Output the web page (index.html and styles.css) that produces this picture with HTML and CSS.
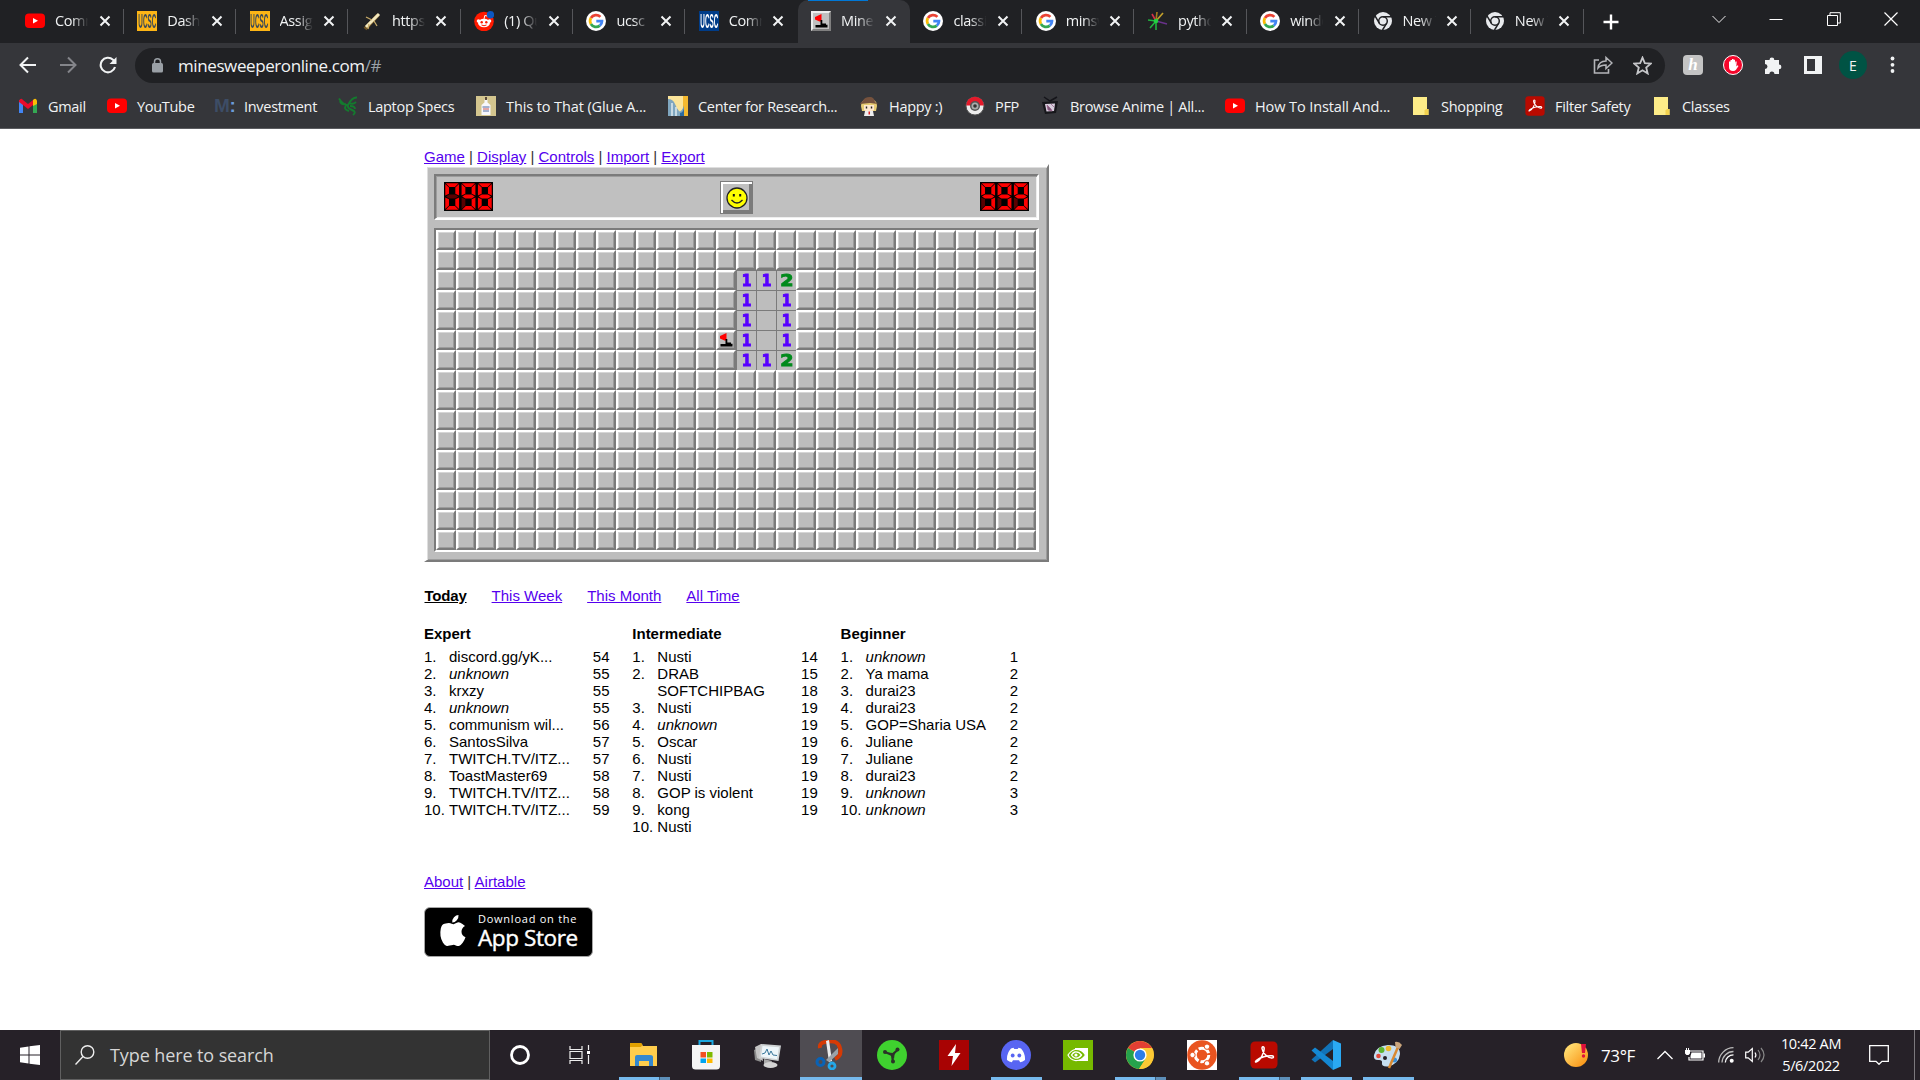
FILE: index.html
```html
<!DOCTYPE html>
<html lang="en">
<head>
<meta charset="utf-8">
<title>Minesweeper Online</title>
<link rel="stylesheet" href="styles.css">
</head>
<body>
<svg class="defs" width="0" height="0" aria-hidden="true">
  <defs>
    <symbol id="i-yt" viewBox="0 0 20 20"><rect y="2.5" width="20" height="14.5" rx="4" fill="#f00"/><path d="M8 7v5.6l5-2.8z" fill="#fff"/></symbol>
    <symbol id="i-google" viewBox="0 0 20 20"><circle cx="10" cy="10" r="10" fill="#fff"/><g fill="none" stroke-width="2.7"><path d="M4.9 7A6 6 0 0 1 14.4 5.9" stroke="#ea4335"/><path d="M4.9 7a6 6 0 0 0 0 6" stroke="#fbbc05"/><path d="M4.9 13a6 6 0 0 0 8.9 1.6" stroke="#34a853"/><path d="M13.8 14.6A5.600 5.600 0 0 0 16 10.200H10.300" stroke="#4285f4"/></g></symbol>
    <symbol id="i-chrome-grey" viewBox="0 0 20 20"><circle cx="10" cy="10" r="9" fill="#e8eaed"/><circle cx="10" cy="10" r="4.300" fill="none" stroke="#202124" stroke-width="1.500"/><path d="M10 5.700h8.500M6.300 12.200L2 4.900M13.700 12.200L9.500 19" stroke="#202124" stroke-width="1.500"/></symbol>
    <symbol id="i-x" viewBox="0 0 12 12"><path d="M1.500 1.500l9 9M10.500 1.500l-9 9" stroke="#f1f3f4" stroke-width="2"/></symbol>
    <symbol id="i-folder" viewBox="0 0 18 20"><path d="M1 1h14v12h1.500v6H1z" fill="#fdec88"/><path d="M12.500 19v-4.500l1.500-1.500h2.500v6z" fill="#f3d24e"/></symbol>
    <symbol id="i-pdf" viewBox="0 0 30 30"><rect x="1.500" y="1.500" width="27" height="27" rx="4.500" fill="#b90a00"/><path d="M7 22c4-1 9-10 8-14.500-.4-1.400-2.200-1-2 1 .4 4.500 6 9.500 10 9.500 2 0 2-2 0-2.200-4.500-.5-12 1.700-15.500 4.500-1.300 1.100-1.200 2.100-.5 1.700z" fill="none" stroke="#fff" stroke-width="1.500"/></symbol>
    <symbol id="i-flag" viewBox="0 0 20 20"><path d="M4 6L10.500 3v7.500h-2L4 8.500z" fill="#f00"/><path d="M9.500 9h1.800v3.500H15v1.200h1.500v2.800h-12v-2.500h5z" fill="#000"/></symbol>
  </defs>
</svg>

<header class="chrome">
  <div class="tabstrip">
    <div class="tab"><svg class="fav"><use href="#i-yt"/></svg><span class="tab-title">Comm</span><svg class="close"><use href="#i-x"/></svg></div>
    <div class="tab"><span class="fav ucsc"><b>UCSC</b></span><span class="tab-title">Dashb</span><svg class="close"><use href="#i-x"/></svg></div>
    <div class="tab"><span class="fav ucsc"><b>UCSC</b></span><span class="tab-title">Assign</span><svg class="close"><use href="#i-x"/></svg></div>
    <div class="tab"><svg class="fav" viewBox="0 0 20 20"><path d="M3 18L16 4" stroke="#6f5424" stroke-width="4"/><path d="M4 16L17 3" stroke="#f3e8bd" stroke-width="3"/><path d="M4 6l6 3M7 13l-1 5M12 10l3 5" stroke="#c6aa67" stroke-width="1.300"/></svg><span class="tab-title">https:</span><svg class="close"><use href="#i-x"/></svg></div>
    <div class="tab"><svg class="fav" viewBox="0 0 20 20"><circle cx="10" cy="10.500" r="9.800" fill="#ff1a00"/><circle cx="4.500" cy="10" r="1.800" fill="#fff"/><circle cx="15.500" cy="10" r="1.800" fill="#fff"/><ellipse cx="10" cy="12" rx="6" ry="4.200" fill="#fff"/><circle cx="7.700" cy="11.200" r="1.200" fill="#ff1a00"/><circle cx="12.300" cy="11.200" r="1.200" fill="#ff1a00"/><path d="M7.500 14q2.500 1.500 5 0" fill="none" stroke="#ff1a00"/><path d="M10 8l.8-3.500 3 .6" fill="none" stroke="#fff"/><circle cx="16.500" cy="3.800" r="3.700" fill="#0b57c2"/></svg><span class="tab-title">(1) Qu</span><svg class="close"><use href="#i-x"/></svg></div>
    <div class="tab"><svg class="fav"><use href="#i-google"/></svg><span class="tab-title">ucsc r</span><svg class="close"><use href="#i-x"/></svg></div>
    <div class="tab before-active"><span class="fav ucsc blue"><b>UCSC</b></span><span class="tab-title">Comm</span><svg class="close"><use href="#i-x"/></svg></div>
    <div class="tab active"><span class="fav mine"><svg viewBox="2 2 16 16"><use href="#i-flag" width="20" height="20"/></svg></span><span class="tab-title">Mines</span><svg class="close"><use href="#i-x"/></svg></div>
    <div class="tab"><svg class="fav"><use href="#i-google"/></svg><span class="tab-title">classic</span><svg class="close"><use href="#i-x"/></svg></div>
    <div class="tab"><svg class="fav"><use href="#i-google"/></svg><span class="tab-title">minsw</span><svg class="close"><use href="#i-x"/></svg></div>
    <div class="tab"><svg class="fav" viewBox="0 0 20 20"><g stroke-width="1.600"><path d="M8 10L4 3" stroke="#d8314a"/><path d="M8 10l1-9" stroke="#a8791d"/><path d="M8 10l7-8" stroke="#c2a02b"/><path d="M8 10l11 3" stroke="#69328b"/><path d="M8 10L0 9M8 10l-6 7M8 10v9" stroke="#22b33e"/></g><circle cx="8" cy="10" r="2.300" fill="#22d142"/></svg><span class="tab-title">pytho</span><svg class="close"><use href="#i-x"/></svg></div>
    <div class="tab"><svg class="fav"><use href="#i-google"/></svg><span class="tab-title">windo</span><svg class="close"><use href="#i-x"/></svg></div>
    <div class="tab"><svg class="fav"><use href="#i-chrome-grey"/></svg><span class="tab-title">New T</span><svg class="close"><use href="#i-x"/></svg></div>
    <div class="tab"><svg class="fav"><use href="#i-chrome-grey"/></svg><span class="tab-title">New T</span><svg class="close"><use href="#i-x"/></svg></div>
    <svg class="new-tab" viewBox="0 0 16 16"><path d="M8 .5v15M.5 8h15" stroke="#fff" stroke-width="2.400"/></svg>
    <div class="window-buttons">
      <svg viewBox="0 0 14 14"><path d="M.5 4L7 10.500 13.500 4" fill="none" stroke="#eee"/></svg>
      <svg viewBox="0 0 14 14"><path d="M.5 7.500h13" stroke="#fff"/></svg>
      <svg viewBox="0 0 14 14"><path d="M.5 3.500h10v10H.5zM3 3V.7h10.300V11H11" fill="none" stroke="#fff"/></svg>
      <svg viewBox="0 0 14 14"><path d="M.5.500l13 13M13.500.500l-13 13" stroke="#fff" stroke-width="1.200"/></svg>
    </div>
  </div>
  <div class="toolbar">
    <svg class="nav" viewBox="0 0 18 18"><path d="M17 9H2M9 1.500L1.500 9 9 16.500" fill="none" stroke="#f1f3f4" stroke-width="2"/></svg>
    <svg class="nav" viewBox="0 0 18 18"><path d="M1 9h15M9 1.500L16.500 9 9 16.500" fill="none" stroke="#84858a" stroke-width="2"/></svg>
    <svg class="nav" viewBox="0 0 18 18"><path d="M16 11a7.300 7.300 0 1 1-2-7.300L16 5.800" fill="none" stroke="#f1f3f4" stroke-width="2.100"/><path d="M17.500 1v7h-7z" fill="#f1f3f4"/></svg>
    <div class="omnibox">
      <svg class="lock" viewBox="0 0 11 15"><rect y="5" width="11" height="9.500" rx="1.500" fill="#9aa0a6"/><path d="M2.500 6V3.800a3 3 0 0 1 6 0V6" fill="none" stroke="#9aa0a6" stroke-width="1.500"/></svg>
      <span class="url">minesweeperonline.com<i>/#</i></span>
      <svg class="share" viewBox="0 0 20 20"><path d="M6 5H1.500v13h14v-4" fill="none" stroke="#b4b5b9" stroke-width="1.600"/><path d="M5 13c.5-4.500 3-7 8-7V2.500L19 8l-6 5.500V10c-4 0-6 .8-8 3z" fill="none" stroke="#b4b5b9" stroke-width="1.500"/></svg>
      <svg class="star" viewBox="0 0 18 18"><path d="M9 1.500l2.200 5.300 5.600.4-4.300 3.700 1.400 5.600L9 13.500l-4.900 3 1.400-5.600L1.200 7.200l5.600-.4z" fill="none" stroke="#c5c6c9" stroke-width="1.700"/></svg>
    </div>
    <div class="extensions">
      <span class="honey">h</span>
      <svg viewBox="0 0 20 20"><circle cx="10" cy="10" r="9.500" fill="#f5062b" stroke="#fff"/><path d="M6 10V6.500h1.500V9 5H9v4-5h1.500v5-4.200H12V9.500l.3-3h1.400l-.4 5 1.200-1.200 1 .8-2.500 3.600Q12 16 10 16q-4 0-4-4z" fill="#fff"/></svg>
      <svg viewBox="0 0 20 20"><path d="M2 5h4.500a2.400 2.400 0 1 1 4.800 0H16v4.500a2.400 2.400 0 1 1 0 4.800V19h-4.600a2.500 2.500 0 0 0-5 0H2v-5a2.500 2.500 0 0 0 0-5z" fill="#f1f3f4"/></svg>
      <svg viewBox="0 0 20 20"><path d="M1 1h18v18H1zM4 4v12h8V4z" fill="#f1f3f4" fill-rule="evenodd"/></svg>
      <span class="avatar">E</span>
      <svg viewBox="0 0 20 20"><g fill="#f1f3f4"><circle cx="9.500" cy="3.500" r="1.900"/><circle cx="9.500" cy="9.800" r="1.900"/><circle cx="9.500" cy="16" r="1.900"/></g></svg>
    </div>
  </div>
  <nav class="bookmarks">
    <a><svg viewBox="0 0 20 20"><path d="M1 4v13h4V8z" fill="#4285f4"/><path d="M15 8v9h4V4z" fill="#34a853"/><path d="M1 4.500Q3 1.500 5 4l5 4 5-4v5l-5 4-5-4-4-3z" fill="#ea0b2b"/><path d="M15 4q3-3 4 1v3l-4 2z" fill="#fbbc05"/></svg>Gmail</a>
    <a><svg><use href="#i-yt"/></svg>YouTube</a>
    <a><span class="invest">M<i>:</i></span>Investment</a>
    <a><svg viewBox="0 0 20 20"><g fill="none" stroke="#147a2e" stroke-width="1.900"><path d="M10 9Q14 1 19 1.500M11 7q4 2 7-1M10 9Q5 9 1 2.500M8 8Q3 9 2 5M10 9q-1 3 4 5t1 5M8 10q-3 3 3 5M12 10q5 0 5 3"/></g></svg>Laptop Specs</a>
    <a class="wide"><svg viewBox="0 0 20 20"><path d="M0 0h20v20H0z" fill="#d3c58e"/><path d="M8.500 3.500h3v3l3 2.500v10h-9V9l3-2.500z" fill="#f7f7fa"/><path d="M9 1h2v3H9z" fill="#5a4a3a"/><path d="M6.500 11h7M7 15h6" stroke="#516aa5"/><path d="M7 13h6" stroke="#c55"/></svg>This to That (Glue A...</a>
    <a><svg viewBox="0 0 20 20"><path d="M0 0h20v20H0z" fill="#fce59a"/><path d="M15 0h5v20h-5z" fill="#f4b92f"/><path d="M0 3q5 0 7 5t4 7 5-5v10H0z" fill="#7fa6bf"/><path d="M4 7v13M8 11v9" stroke="#dfeaf0" stroke-width="1.500"/><path d="M12 17q4 0 4-8v11h-4z" fill="#2c6aa0"/></svg>Center for Research...</a>
    <a><svg viewBox="0 0 20 20"><path d="M2 10q0-7 8-7t8 7l-1 5H3z" fill="#e7cc73"/><path d="M1 8q1-2 3-3 1-4 7-4 4 0 5 5l3 2-8-1z" fill="#76523d"/><path d="M5 9h10v5q-5 3-10 0z" fill="#ffe9cf"/><path d="M6 15h8l1 5H5z" fill="#eee"/><path d="M7.500 10.500v2M12.500 10.500v2" stroke="#222" stroke-width="1.400"/><path d="M9.500 15.500h1.500v3H9.500z" fill="#d22"/></svg>Happy :)</a>
    <a><svg viewBox="0 0 20 20"><circle cx="10" cy="10" r="9" fill="#ececec" stroke="#555"/><path d="M1.200 9.500a8.800 8.800 0 0 1 17.600 0z" fill="#e5192a"/><circle cx="10" cy="10" r="5" fill="#555"/><circle cx="10" cy="10" r="3.500" fill="#aaa"/><circle cx="10" cy="10" r="1.800" fill="#333"/></svg>PFP</a>
    <a><svg viewBox="0 0 20 20"><path d="M4 1l6 4 7-4" fill="none" stroke="#15151a" stroke-width="1.500"/><path d="M2 6l16-1-2 12-11 1z" fill="#17171b"/><path d="M5 8l10-.500-1 7.500-7.500.5z" fill="#d8cede"/><path d="M7 9l4 4 1 2-4-1zM11 8l3 3" fill="#7a5578" stroke="#935a80" stroke-width=".7"/></svg>Browse Anime | All...</a>
    <a class="wide"><svg><use href="#i-yt"/></svg>How To Install And...</a>
    <a><svg><use href="#i-folder"/></svg>Shopping</a>
    <a><svg viewBox="1 1 28 28"><use href="#i-pdf" width="30" height="30"/></svg>Filter Safety</a>
    <a><svg><use href="#i-folder"/></svg>Classes</a>
  </nav>
</header>

<main class="page">
  <nav class="links top-links"><a>Game</a> | <a>Display</a> | <a>Controls</a> | <a>Import</a> | <a>Export</a></nav>
  <section class="game">
    <div class="panel">
      <svg class="led" id="mines" viewBox="0 0 39 23" preserveAspectRatio="none"></svg>
      <div class="face"><svg viewBox="0 0 22 22"><circle cx="11" cy="11" r="10" fill="#ff0" stroke="#222" stroke-width="1.300"/><path d="M6.800 7h2v2.500h-2zM13.200 7h2v2.500h-2z" fill="#111"/><path d="M5.500 13q5.500 6 11 0" fill="none" stroke="#222" stroke-width="1.300"/></svg></div>
      <svg class="led" id="clock" viewBox="0 0 39 23" preserveAspectRatio="none"></svg>
    </div>
    <div class="field" id="field"></div>
  </section>
  <nav class="periods"><a class="current">Today</a><a>This Week</a><a>This Month</a><a>All Time</a></nav>
  <section class="scores">
    <div class="board"><h2>Expert</h2>
      <ol>
        <li><span>1.</span><span>discord.gg/yK...</span><span>54</span></li>
        <li><span>2.</span><em>unknown</em><span>55</span></li>
        <li><span>3.</span><span>krxzy</span><span>55</span></li>
        <li><span>4.</span><em>unknown</em><span>55</span></li>
        <li><span>5.</span><span>communism wil...</span><span>56</span></li>
        <li><span>6.</span><span>SantosSilva</span><span>57</span></li>
        <li><span>7.</span><span>TWITCH.TV/ITZ...</span><span>57</span></li>
        <li><span>8.</span><span>ToastMaster69</span><span>58</span></li>
        <li><span>9.</span><span>TWITCH.TV/ITZ...</span><span>58</span></li>
        <li><span>10.</span><span>TWITCH.TV/ITZ...</span><span>59</span></li>
      </ol>
    </div>
    <div class="board"><h2>Intermediate</h2>
      <ol>
        <li><span>1.</span><span>Nusti</span><span>14</span></li>
        <li><span>2.</span><span>DRAB</span><span>15</span></li>
        <li><span></span><span>SOFTCHIPBAG</span><span>18</span></li>
        <li><span>3.</span><span>Nusti</span><span>19</span></li>
        <li><span>4.</span><em>unknown</em><span>19</span></li>
        <li><span>5.</span><span>Oscar</span><span>19</span></li>
        <li><span>6.</span><span>Nusti</span><span>19</span></li>
        <li><span>7.</span><span>Nusti</span><span>19</span></li>
        <li><span>8.</span><span>GOP is violent</span><span>19</span></li>
        <li><span>9.</span><span>kong</span><span>19</span></li>
        <li><span>10.</span><span>Nusti</span><span></span></li>
      </ol>
    </div>
    <div class="board"><h2>Beginner</h2>
      <ol>
        <li><span>1.</span><em>unknown</em><span>1</span></li>
        <li><span>2.</span><span>Ya mama</span><span>2</span></li>
        <li><span>3.</span><span>durai23</span><span>2</span></li>
        <li><span>4.</span><span>durai23</span><span>2</span></li>
        <li><span>5.</span><span>GOP=Sharia USA</span><span>2</span></li>
        <li><span>6.</span><span>Juliane</span><span>2</span></li>
        <li><span>7.</span><span>Juliane</span><span>2</span></li>
        <li><span>8.</span><span>durai23</span><span>2</span></li>
        <li><span>9.</span><em>unknown</em><span>3</span></li>
        <li><span>10.</span><em>unknown</em><span>3</span></li>
      </ol>
    </div>
  </section>
  <nav class="links foot-links"><a>About</a> | <a>Airtable</a></nav>
  <div class="appstore">
    <svg viewBox="0 0 26 32"><path d="M18.500 0q.3 3-1.700 5.300T12.300 7.500q-.3-3 1.700-5.200T18.500 0zM25 11q-3.500 2-3.500 5.700T25.500 22.300q-1 3-2.800 5.500T19 31q-1.500.2-3.200-.6t-3-.4q-1.300 0-3.100.6T6.800 31q-1.800-.2-3.800-3.300T.5 21 .8 13.500 4.500 8.800 8.900 8q1.500.3 2.800.8t1.900.4T16.300 8t4-.3T25 11z" fill="#fff"/></svg>
    <div><small>Download on the</small><strong>App Store</strong></div>
  </div>
</main>

<footer class="taskbar">
  <div class="start"><svg viewBox="0 0 20 20"><path d="M0 2.800L8.500 1.500v8H0zM9.500 1.300L20 0v9.500H9.500zM0 10.500h8.500v8L0 17.300zM9.500 10.500H20V20L9.500 18.700z" fill="#fff"/></svg></div>
  <div class="search"><svg viewBox="0 0 20 20"><circle cx="12.500" cy="7" r="6.300" fill="none" stroke="#eee" stroke-width="1.400"/><path d="M8 11.500L.5 19.500" stroke="#eee" stroke-width="1.400"/></svg><span>Type here to search</span></div>
  <div class="task"><svg viewBox="0 0 30 30"><circle cx="15" cy="15" r="8.500" fill="none" stroke="#fff" stroke-width="2.800"/></svg></div>
  <div class="task"><svg viewBox="0 0 30 30"><path d="M3 6v3.500h12V6M3 24v-3.500h12V24M3 11.500h12v7H3zM21.500 5v5M21.500 15v9" fill="none" stroke="#eee" stroke-width="1.200"/><path d="M20 11h3v3h-3z" fill="#fff"/></svg></div>
  <div class="task run multi"><svg viewBox="0 0 30 30"><path d="M1 4q0-1 1-1h10l2 3h14v20H1z" fill="#ffcd4c"/><path d="M1 4q0-1 1-1h10l1.500 1.500L12 7H1z" fill="#e0a000"/><path d="M6 26v-9q0-2 2-2h13q3 0 3 2v9h-4v-5H10v5z" fill="#3488cf"/></svg></div>
  <div class="task"><svg viewBox="0 0 30 30"><path d="M8.500 6.500V1h13v5.500" fill="none" stroke="#1ba8e0" stroke-width="2"/><path d="M1 5h28v21q0 3.500-3.500 3.500h-21Q1 29.500 1 26z" fill="#f5f5f5"/><path d="M9.500 12H15v5.500H9.500z" fill="#f25022"/><path d="M16 12h5.500v5.500H16z" fill="#7fba00"/><path d="M9.500 18.500H15V23H9.500z" fill="#00a4ef"/><path d="M16 18.500h5.500V23H16z" fill="#ffb900"/></svg></div>
  <div class="task"><svg viewBox="0 0 30 30"><path d="M1 10l7-3v15l-6-2z" fill="#8c8c8c"/><path d="M2 7l6-3 2 17-6-3z" fill="#c4c4c4"/><path d="M8 4l20 1.500L25.500 21 6 18z" fill="#cfd3d4"/><path d="M9.500 6l16.500 1.200-2 12L8 16.500z" fill="#eef6fa"/><path d="M9 14l3-1 2-4 2 6 2-4 2 4 4 .5" fill="none" stroke="#38779b"/><path d="M11 19l8 2-1 3h-7z" fill="#aaa"/><ellipse cx="17.500" cy="25" rx="7" ry="3" fill="#d4d4d4"/></svg></div>
  <div class="task run focus"><svg viewBox="0 0 30 30"><path d="M5 8Q4 3 10 2q13-3 15 6 2 8-5 11" fill="none" stroke="#d53a05" stroke-width="4"/><path d="M11 1l3-1 3 21-3 1z" fill="#ececec"/><path d="M23 8v6l-9 8-3-2z" fill="#9ba2a8"/><circle cx="5.500" cy="22" r="3.500" fill="none" stroke="#0a62b5" stroke-width="3"/><circle cx="17" cy="26" r="3" fill="none" stroke="#23a7e8" stroke-width="2.800"/></svg></div>
  <div class="task"><svg viewBox="0 0 30 30"><circle cx="15" cy="15" r="15" fill="#3fd12f"/><path d="M15 15L8 12M15 15l6-5.500M15 15l1 7" stroke="#2b3328" stroke-width="2.200"/><path d="M11 12.500l5 .500 3-2-1.500 4-.500 4-2.500-3z" fill="#2b3328"/><g fill="#2b3328"><circle cx="8" cy="12" r="2"/><circle cx="20.500" cy="9.500" r="2"/><circle cx="16" cy="21.500" r="2"/></g></svg></div>
  <div class="task"><svg viewBox="0 0 30 30"><path d="M0 0h30v30H0z" fill="#a80303"/><path d="M17 4L8.500 16H14l-1.500 10L21.500 13H16z" fill="#fff"/></svg></div>
  <div class="task run"><svg viewBox="0 0 30 30"><circle cx="15" cy="15" r="15" fill="#5865f2"/><path d="M10 8.500l2.500-.700.800 1.200h3.400l.8-1.200 2.500.7q4.500 5 4 11.500-2.300 1.800-4.800 2.200l-1.200-2h-6l-1.200 2Q8.300 21.800 6 20q-.5-6.500 4-11.500z" fill="#fff"/><ellipse cx="11.700" cy="15.500" rx="1.900" ry="2.100" fill="#5865f2"/><ellipse cx="18.300" cy="15.500" rx="1.900" ry="2.100" fill="#5865f2"/></svg></div>
  <div class="task"><svg viewBox="0 0 30 30"><path d="M0 0h30v30H0z" fill="#76b900"/><path d="M12 8h13v13H12z" fill="#fff"/><path d="M12 9.500q7-.5 10.500 5.500-4 6-10.500 5.500-5-1-7-5.500 3-4.500 7-5.500z" fill="#76b900" stroke="#fff" stroke-width="1.200"/><path d="M12 12q4-.5 6.500 3-2.500 3.500-6.500 3-2.500-1-3.500-3 1.500-2.500 3.500-3z" fill="none" stroke="#fff" stroke-width="1.300"/><circle cx="13" cy="15" r="1.600" fill="#fff"/></svg></div>
  <div class="task run multi"><svg viewBox="0 0 30 30"><circle cx="15" cy="15" r="14" fill="#fcc934"/><path d="M15 15L2.900 8A14 14 0 0 1 27.100 8H15z" fill="#e23f33"/><path d="M15 15L2.900 8A14 14 0 0 0 14 29l7-10.500z" fill="#25a24c"/><path d="M15 8h12.100Q31 16 25 25q-5 4.500-11 4l7-11z" fill="#fcc934"/><circle cx="15" cy="15" r="6.600" fill="#fff"/><circle cx="15" cy="15" r="5.200" fill="#2c7de9"/></svg></div>
  <div class="task"><svg viewBox="0 0 30 30"><path d="M0 0h30v30H0z" fill="#fff"/><circle cx="15" cy="15" r="14.800" fill="#e95420"/><circle cx="15" cy="15" r="6.800" fill="none" stroke="#fff" stroke-width="3" stroke-dasharray="12.200 2"/><g fill="#fff" stroke="#e95420"><circle cx="5.500" cy="15" r="2.700"/><circle cx="20" cy="6.700" r="2.700"/><circle cx="20" cy="23.300" r="2.700"/></g></svg></div>
  <div class="task run multi"><svg><use href="#i-pdf"/></svg></div>
  <div class="task run"><svg viewBox="0 0 30 30"><path d="M22 0l8 3.500v23L22 30z" fill="#2aa9f3"/><path d="M22 0v9L4 22.500.5 19.500z" fill="#1173b8"/><path d="M22 30v-9L4 7.500.5 10.500z" fill="#1488d3"/></svg></div>
  <div class="task run"><svg viewBox="0 0 30 30"><path d="M15 5Q27 5 27 14q-1 10-12 12.500-7 .5-6-4 .5-3-4-2.500Q0 20 1 15 3 6 15 5z" fill="#c6dff0"/><circle cx="8.500" cy="10" r="3" fill="#5cb531"/><circle cx="15.500" cy="8.500" r="2.800" fill="#f0b72a"/><circle cx="5.500" cy="16" r="2.300" fill="#e34a3b"/><circle cx="12" cy="18" r="2" fill="#262128"/><circle cx="21.500" cy="20" r="2.500" fill="#3a8fd8"/><path d="M16 28L25 7" stroke="#d98a32" stroke-width="2.500"/><path d="M22 2q4-1 7 3l-2.500 4-4-2z" fill="#caa57c"/></svg></div>
  <div class="tray">
    <svg class="sun" viewBox="0 0 24 24"><defs><linearGradient id="sun" x2="1" y2="1"><stop offset=".2" stop-color="#ffd96b"/><stop offset="1" stop-color="#f98a0a"/></linearGradient></defs><circle cx="12" cy="12" r="12" fill="url(#sun)"/><path d="M17 1h5l-1 9h-3z" fill="#e0103a"/><circle cx="19.500" cy="13" r="1.700" fill="#e0103a"/></svg>
    <span class="temp">73°F</span>
    <svg class="chev" viewBox="0 0 16 10"><path d="M.5 9L8 1.500 15.500 9" fill="none" stroke="#fff" stroke-width="1.300"/></svg>
    <svg class="batt" viewBox="0 0 20 14"><path d="M5 3h13v9H4V9" fill="none" stroke="#fff" stroke-width="1.200"/><path d="M6.500 4.500h10v6H5.500V8zM18.500 5.500H20v4h-1.500zM0 2h5v3.500l-1.500 1.500h-2L0 5.500zM1 0h1v2H1zM3 0h1v2H3z" fill="#fff"/></svg>
    <svg class="wifi" viewBox="0 0 16 16"><g fill="none" stroke="#bbb" stroke-width="1.300"><path d="M.7 15.500A15 15 0 0 1 15.500.7"/><path d="M4 15.500A11.500 11.500 0 0 1 15.500 4.500" /><path d="M7.300 15.500a8.200 8.200 0 0 1 8.200-7.700" stroke="#fff"/></g><circle cx="13.700" cy="13.700" r="2" fill="#fff"/></svg>
    <svg class="vol" viewBox="0 0 20 16"><path d="M.7 5.200h2.500L7.300 1.500v13L3.200 10.800H.7z" fill="none" stroke="#fff" stroke-width="1.200"/><path d="M10 5.500q1.800 2.500 0 5" fill="none" stroke="#fff" stroke-width="1.200"/><path d="M13 3q4 5 0 10M16 1q6 7 0 14" fill="none" stroke="#888" stroke-width="1.200"/></svg>
    <div class="datetime"><span>10:42 AM</span><span>5/6/2022</span></div>
    <svg class="note" viewBox="0 0 20 20"><path d="M.7.700h18.600v15.600H13l-3 3-3-3H.7z" fill="none" stroke="#fff" stroke-width="1.300"/></svg>
  </div>
</footer>
<script src="board.js"></script>
</body>
</html>
```
FILE: styles.css
```css
* { box-sizing: border-box; }
body { margin: 0; width: 1920px; height: 1080px; overflow: hidden; display: flex; flex-direction: column; background: #fff; font-family: "Liberation Sans", Arial, sans-serif; font-size: 15px; color: #000; }
svg { display: block; flex: none; }
.defs { display: none; }

/* Browser window */
.chrome { height: 129px; flex: none; background: #35363a; border-bottom: 1px solid #5b5c60; color: #f1f3f4; font-family: "Open Sans", "Noto Sans", sans-serif; }
.tabstrip { height: 43px; background: #202124; display: flex; align-items: center; padding-left: 11.5px; }
.tab { width: 112.3px; height: 43px; flex: none; display: flex; align-items: center; position: relative; padding: 0 0 1px 13.5px; }
.tab::after { content: ""; position: absolute; right: 0; top: 9px; width: 1px; height: 25px; background: #55565a; }
.tab.active::after, .tab.before-active::after { display: none; }
.tab.active { background: #35363a; border-radius: 10px 10px 0 0; }
.tab.active::before { content: ""; position: absolute; left: 10px; top: 0; width: 60px; height: 1px; background: #0078d7; }
.fav { width: 20px; height: 20px; flex: none; }
.ucsc { background: #fdb515; color: #3c4a57; display: flex; justify-content: center; align-items: center; }
.ucsc b { font: 700 15px/20px "Liberation Sans", sans-serif; transform: scale(.42, 1.3); }
.ucsc.blue { background: #003c88; color: #fff; }
.mine { background: #c0c0c0; border: 2px solid #eee; border-right-color: #808080; border-bottom-color: #808080; }
.mine svg { width: 16px; height: 16px; }
.tab-title { width: 34px; margin: -1px 1px 0 10px; overflow: hidden; white-space: nowrap; font-size: 14.5px; letter-spacing: -.4px; line-height: 24px; -webkit-mask-image: linear-gradient(90deg, #000 50%, transparent 98%); mask-image: linear-gradient(90deg, #000 50%, transparent 98%); }
.close { width: 12px; height: 12px; margin-left: 8.500px; }
.new-tab { width: 16px; height: 16px; margin-left: 19px; }
.window-buttons { margin: -6px 22px 0 auto; display: flex; gap: 43.500px; }
.window-buttons svg { width: 14px; height: 14px; }
.toolbar { height: 43px; display: flex; align-items: center; padding: 1px 0 0 19px; }
.nav { width: 18px; height: 18px; margin-right: 22px; }
.omnibox { width: 1530px; height: 35px; margin-left: -4px; border-radius: 18px; background: #202124; display: flex; align-items: center; padding: 0 13px 0 17px; }
.lock { width: 11px; height: 15px; margin-right: 15px; }
.url { flex: 1; font-size: 17px; letter-spacing: -.4px; }
.url i { font-style: normal; color: #9aa0a6; }
.share { width: 20px; height: 20px; margin-right: 20px; }
.star { width: 19px; height: 19px; }
.extensions { display: flex; align-items: center; gap: 20px; padding-left: 18px; }
.extensions svg, .honey { width: 20px; height: 20px; }
.honey { border-radius: 4px; background: #c4c4c4; color: #fff; font: italic 700 17px/19px "Liberation Serif", serif; text-align: center; }
.avatar { width: 28px; height: 28px; margin: 0 -4px; border-radius: 50%; background: #005344; display: flex; align-items: center; justify-content: center; font-size: 14px; }
.bookmarks { height: 40px; padding-left: 18px; display: grid; align-items: center; grid-template-columns: 89px 107px 124px 138px 192px 191px 106px 75px 185px 186px 114px 127px 100px; font-size: 14.500px; letter-spacing: -.3px; }
.bookmarks a { display: flex; align-items: center; white-space: nowrap; }
.bookmarks .wide { letter-spacing: -.1px; }
.bookmarks svg, .invest { width: 20px; height: 20px; margin-right: 10px; flex: none; }
.invest { font: 700 19px/20px "Liberation Sans", sans-serif; color: #3d4d66; }
.invest i { font-style: normal; color: #6c9bd9; }

/* Game page */
.page { flex: 1; padding: 19px 0 0 424px; }
.links { line-height: 18px; color: #333; }
.links a, .periods a { color: #50e; text-decoration: underline; }
.game { width: 625px; height: 398px; margin: -2px 0 0; background: #bdbdbd; border: solid #7b7b7b; border-width: 3px 2px 2px 3px; border-top-color: #fff; border-left-color: #fff; box-shadow: inset 1px 1px #dedede, inset -1px -1px #9c9c9c; padding: 7px 8px 7px 7px; }
.panel { height: 46px; background: #c0c0c0; border: 2px solid #7b7b7b; border-right-color: #fff; border-bottom-color: #fff; box-shadow: inset 1px 1px #9c9c9c, inset -1px -1px #eee; display: flex; align-items: center; justify-content: space-between; padding: 0 8px; }
.led { width: 49px; height: 29px; margin-top: -1px; background: #000; }
.face { width: 33px; height: 33px; margin-top: 1px; border: 1px solid #7b7b7b; display: flex; align-items: center; justify-content: center; box-shadow: inset 2px 2px #fff, inset -3px -3px #7b7b7b; }
.face svg { width: 22px; height: 22px; }
.field { margin-top: 8px; width: 605px; border: 2px solid #7b7b7b; border-right: 3px solid #fff; border-bottom: 2px solid #fff; display: grid; grid-template-columns: repeat(30, 20px); grid-auto-rows: 20px; }
.cell { border: 2px solid #7b7b7b; border-left-color: #fff; border-top-color: #fff; box-shadow: inset 1px 1px #d6d6d6, inset -1px -1px #9c9c9c; background: #bdbdbd; }
.cell svg { width: 20px; height: 20px; margin: -2px; }
.cell.open { border: solid #7b7b7b; border-width: 1px 0 0 1px; box-shadow: none; display: flex; justify-content: center; align-items: center; padding: 1px 0 0 1px; font: 700 16.500px/18px "DejaVu Sans", sans-serif; }
.cell b { -webkit-text-stroke: 1px currentColor; }
.n1 b { color: #5800ff; transform: scaleX(.85); }
.n2 b { color: #008a1c; transform: scaleX(1.150); }

.periods { display: flex; margin: 25px 0 0 .5px; gap: 25px; line-height: 18px; }
.periods .current { color: #000; font-weight: 700; letter-spacing: -.2px; }
.scores { display: flex; margin-top: 20px; height: 211px; }
.board { width: 208.300px; }
.board h2 { font-size: 15px; line-height: 18px; margin: 0 0 5px; }
.board ol { list-style: none; margin: 0; padding: 0; }
.board li { display: grid; grid-template-columns: 25px 1fr 18px; width: 185.500px; line-height: 17px; height: 17px; }
.board:last-child li { width: 177.500px; }
.board li span:last-child { text-align: right; }
.foot-links { margin-top: 37px; }
.appstore { width: 169px; height: 50px; margin-top: 16px; border: 1px solid #a6a6a6; border-radius: 6px; background: #000; color: #fff; display: flex; padding: 0 0 0 15px; font-family: "Open Sans", sans-serif; }
.appstore svg { width: 26px; height: 32px; margin: 7px 12px 0 0; }
.appstore div { display: flex; flex-direction: column; }
.appstore small { font-size: 11px; line-height: 12px; margin-top: 5px; letter-spacing: .75px; white-space: nowrap; }
.appstore strong { font-size: 22.500px; line-height: 26px; font-weight: 500; letter-spacing: -.4px; white-space: nowrap; -webkit-text-stroke: .4px #fff; }

/* Desktop taskbar */
.taskbar { height: 50px; flex: none; background: #262128; display: flex; font-family: "Open Sans", "Noto Sans", sans-serif; color: #fff; }
.start { width: 60px; padding: 15px 0 0 20px; }
.start svg { width: 20px; height: 20px; }
.search { width: 430px; background: #333; border: 1px solid #606060; display: flex; align-items: center; padding-left: 14px; font-size: 18px; letter-spacing: -.1px; color: #d6d6d6; }
.search svg { width: 20px; height: 20px; margin-right: 15px; }
.task { width: 62px; display: flex; align-items: center; justify-content: center; position: relative; padding-right: 2px; }
.task svg { width: 30px; height: 30px; }
.run::after { content: ""; position: absolute; left: 5px; bottom: 0; width: 51px; height: 3px; background: #76b9ed; }
.multi::after { background: linear-gradient(90deg, #76b9ed 40px, #3d5c78 40px, #3d5c78 41px, #5d8fb9 41px); }
.focus { background: #4f4c52; }
.focus::after { left: 0; width: 62px; }
.tray { margin-left: auto; display: flex; align-items: center; width: 356px; border-right: 1px solid #7c797e; margin-right: 5px; padding-left: 5px; }
.sun { width: 24px; height: 24px; }
.temp { width: 42px; margin-left: 13px; font-size: 17px; letter-spacing: -.4px; }
.chev { width: 16px; height: 10px; margin-left: 14px; }
.batt { width: 20px; height: 14px; margin-left: 12px; }
.wifi { width: 16px; height: 16px; margin-left: 13px; }
.vol { width: 20px; height: 16px; margin-left: 11px; }
.datetime { display: flex; flex-direction: column; align-items: center; width: 78px; margin-left: 7px; font-size: 14.500px; letter-spacing: -.35px; line-height: 22.500px; white-space: nowrap; }
.note { width: 20px; height: 20px; margin-left: 19px; }
```
FILE: board.js
```js
const rows = ["112", "1 1", "1 1", "1 1", "112"];
const firstRow = 2, firstCol = 15;
const field = document.getElementById("field");
for (let r = 0; r < 16; r++) {
  for (let c = 0; c < 30; c++) {
    const cell = document.createElement("div");
    cell.className = "cell";
    const value = (rows[r - firstRow] || "")[c - firstCol];
    if (value !== undefined) {
      cell.classList.add("open", "n" + value.trim());
      if (value !== " ") cell.innerHTML = "<b>" + value + "</b>";
    } else if (r === 5 && c === 14) {
      cell.innerHTML = '<svg viewBox="0 0 20 20"><use href="#i-flag"/></svg>';
    }
    field.appendChild(cell);
  }
}

// Seven-segment shapes on a 13x23 digit, in the order a b c d e f g
const segments = [
  "1.3,1 11.7,1 8.700,4 4.300,4",
  "12,1.600 12,10.800 9,9.300 9,4.400",
  "12,12.200 12,21.400 9,18.600 9,13.700",
  "1.3,22 11.7,22 8.700,19 4.300,19",
  "1,12.200 1,21.400 4,18.600 4,13.700",
  "1,1.600 1,10.800 4,9.300 4,4.400",
  "1.500,11.500 4,10 9,10 11.500,11.500 9,13 4,13"
];
const lit = { 0: "1111110", 8: "1111111", 9: "1111011" };
function drawNumber(id, text) {
  document.getElementById(id).innerHTML = [...text].map((d, i) =>
    '<g transform="translate(' + i * 13 + ')">' + segments.map((points, s) =>
      '<polygon points="' + points + '" fill="' + (lit[d][s] === "1" ? "#f00" : "#5a0000") + '"/>').join("") + "</g>"
  ).join("");
}
drawNumber("mines", "098");
drawNumber("clock", "999");
```
